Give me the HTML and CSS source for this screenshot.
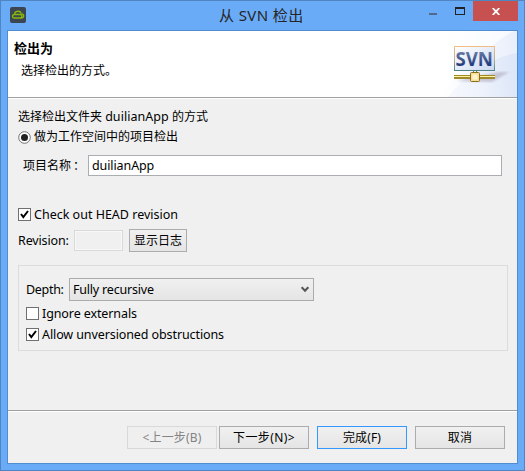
FILE: index.html
```html
<!DOCTYPE html>
<html lang="zh-CN">
<head>
<meta charset="utf-8">
<title>从 SVN 检出</title>
<link rel="stylesheet" href="styles.css">
</head>
<body>
<div class="window">
  <div class="titlebar">
    <svg class="app-icon" width="16" height="16" viewBox="0 0 16 16">
      <rect width="16" height="16" rx="2" fill="#3b4652"/>
      <path d="M4.5 7.5C4.5 3.5 10.5 3.2 11 6.5M4.5 7.5H10.5M4.5 7.5C1.7 7.8 2 11 4.5 11H11.5C14.5 11 14.3 6.7 11.5 7M10 7.5C12.5 7.8 12.5 10.5 10 11" fill="none" stroke="#86b50b" stroke-width="1.4"/>
    </svg>
    <div class="title">从 SVN 检出</div>
    <div class="controls">
      <span class="minimize"></span>
      <span class="maximize"></span>
      <span class="close"><svg width="8" height="7" viewBox="0 0 8 7"><path d="M.7 0L7.3 7M7.3 0L.7 7" stroke="#fff" stroke-width="1.8"/></svg></span>
    </div>
  </div>
  <div class="client">
    <header class="banner">
      <div class="banner-text">
        <div class="heading">检出为</div>
        <div class="description">选择检出的方式。</div>
      </div>
      <svg class="banner-art" width="75" height="66" viewBox="0 0 75 66">
        <defs>
          <linearGradient id="sweep" x1="0" y1="0.5" x2="1" y2="0.4"><stop offset="0" stop-color="#f6f8fe"/><stop offset=".5" stop-color="#ecf1fb"/><stop offset="1" stop-color="#dce6f8"/></linearGradient>
          <linearGradient id="low" x1="0" y1="0" x2="1" y2="0"><stop offset="0" stop-color="#fff"/><stop offset="1" stop-color="#e9effb"/></linearGradient>
          <linearGradient id="frame" x1="0" y1="0" x2="0" y2="1"><stop offset="0" stop-color="#efbd83"/><stop offset=".55" stop-color="#b6ae93"/><stop offset="1" stop-color="#4f8383"/></linearGradient>
          <linearGradient id="screen" x1="0" y1="0" x2="1" y2="1"><stop offset="0" stop-color="#fff"/><stop offset="1" stop-color="#cbd9f3"/></linearGradient>
          <linearGradient id="ink" x1="0" y1="0" x2="0" y2="1"><stop offset="0.2" stop-color="#7080a8"/><stop offset=".8" stop-color="#1d3577"/></linearGradient>
          <filter id="soft"><feGaussianBlur stdDeviation="1.3"/></filter>
        </defs>
        <rect width="75" height="66" fill="url(#low)"/>
        <path d="M6 66C25 42 47 27 75 22V66Z" fill="url(#sweep)"/>
        <path d="M0 0H72C55 8 45 22 24 36L0 60Z" fill="#fff" opacity=".65"/>
        <path d="M14 50L56 41H67L50 51Z" fill="#b8b4c7" opacity=".7" filter="url(#soft)"/>
        <rect x="12.5" y="15.5" width="40" height="24" fill="url(#screen)" stroke="url(#frame)"/>
        <text class="svn" x="13.5" y="35" textLength="37.5" lengthAdjust="spacingAndGlyphs" fill="url(#ink)">SVN</text>
        <path d="M31.5 40V42M34.5 40V42" stroke="#658071"/>
        <rect x="12" y="44" width="41" height="4" fill="#a08b28"/>
        <path d="M12 45.5H53" stroke="#fff3a0"/>
        <rect x="28.5" y="41.5" width="9" height="9" rx="1" fill="#f6df95" stroke="#88701e"/>
        <rect x="30.5" y="43.5" width="5" height="5" fill="#fff2cf"/>
      </svg>
    </header>
    <main class="content">
      <div class="prompt"><span>选择检出文件夹 </span><span class="latin prompt-name">duilianApp</span><span> 的方式</span></div>
      <div class="radio-row">
        <svg width="13" height="13" viewBox="0 0 13 13"><circle cx="6.5" cy="6.5" r="5.8" fill="#fff" stroke="#707070"/><circle cx="6.5" cy="6.5" r="3.5" fill="#222"/></svg>
        <span>做为工作空间中的项目检出</span>
      </div>
      <div class="name-row"><span class="name-label">项目名称<span class="colon">：</span></span><div class="field latin">duilianApp</div></div>
      <div class="check-row head-row">
        <span class="box"><svg width="11" height="11" viewBox="0 0 11 11"><path d="M2 5L4.3 8L9 2" fill="none" stroke="#000" stroke-width="2"/></svg></span>
        <span class="latin">Check out HEAD revision</span>
      </div>
      <div class="revision-row">
        <span class="latin revision-label">Revision:</span><div class="revision-field"></div><div class="button log-button">显示日志</div>
      </div>
      <section class="group">
        <div class="depth-row"><span class="latin depth-label">Depth:</span>
          <div class="select"><span class="latin recursive">Fully recursive</span><svg width="8" height="7" viewBox="0 0 8 7"><path d="M.7 1.2L4 4.8L7.3 1.2" fill="none" stroke="#555" stroke-width="2"/></svg></div>
        </div>
        <div class="check-row ignore-row"><span class="box"></span><span class="latin ignore-label">Ignore externals</span></div>
        <div class="check-row allow-row"><span class="box"><svg width="11" height="11" viewBox="0 0 11 11"><path d="M2 5L4.3 8L9 2" fill="none" stroke="#000" stroke-width="2"/></svg></span><span class="latin allow-label">Allow unversioned obstructions</span></div>
      </section>
    </main>
    <footer class="footer">
      <div class="button nav disabled">&lt;上一步(B)</div>
      <div class="button nav next">下一步(N)&gt;</div>
      <div class="button nav finish">完成(F)</div>
      <div class="button nav">取消</div>
    </footer>
  </div>
</div>
</body>
</html>
```
FILE: styles.css
```css
* { box-sizing: border-box; }
body { margin: 0; color: #000; font: 12px/16px "Noto Sans", "Noto Sans CJK SC", sans-serif; overflow: hidden; }
svg { display: block; flex: none; }
.window { width: 525px; height: 471px; padding: 0 6px 6px; background: #6aabf7; border: 1px solid #4f86c1; }
.titlebar { height: 29px; display: flex; justify-content: space-between; align-items: flex-start; margin-right: -1px; }
.app-icon { margin: 6px 0 0 3px; }
.title { width: 90px; margin: 4px 0 0 193px; font-size: 15px; line-height: 20px; letter-spacing: .4px; white-space: nowrap; color: #252525; }
.controls { display: flex; margin-left: auto; }
.minimize { width: 8px; height: 2px; margin: 12px 18px 0 0; background: #50698c; }
.maximize { width: 10px; height: 8px; margin: 6px 8px 0 0; border: 1px solid #222; border-top-width: 2px; }
.close { width: 45px; height: 20px; margin-right: 1px; background: #c75050; display: flex; align-items: center; justify-content: center; }
.client { height: 434px; border: 1px solid #4f8cd0; background: #f0f0f0; }
.banner { height: 68px; display: flex; justify-content: space-between; background: linear-gradient(#fff 66px, #a0a0a0 66px, #a0a0a0 67px, #fff 67px); }
.banner-text { padding: 8px 0 0 6px; }
.heading { font-weight: 700; font-size: 13px; line-height: 18px; }
.description { margin: 5px 0 0 7px; line-height: 18px; }
.svn { font: 700 20px "Noto Sans", sans-serif; }
.content { height: 311px; padding: 10px 9px 0 10px; }
.prompt { height: 16px; white-space: pre; }
.latin { font-size: 12.5px; white-space: nowrap; }
.prompt-name { letter-spacing: .05px; }
.radio-row { height: 16px; margin-top: 4px; display: flex; align-items: center; gap: 3px; }
.name-row { display: flex; align-items: center; margin-top: 10px; padding-left: 5px; }
.name-label { width: 65px; }
.colon { padding-left: 2px; }
.field { width: 414px; height: 21px; border: 1px solid #abadb3; background: #fff; padding: 2px 3px 0; letter-spacing: -.1px; }
.check-row { display: flex; align-items: center; height: 16px; gap: 3px; }
.check-row .latin { padding-top: 2px; }
.box { width: 13px; height: 13px; border: 1px solid #707070; background: #fff; flex: none; }
.head-row { margin-top: 30px; }
.revision-row { margin-top: 7px; height: 23px; display: flex; align-items: center; }
.revision-label { width: 56px; letter-spacing: -.15px; }
.revision-field { width: 49px; height: 21px; border: 1px solid #d9d9d9; box-shadow: inset 0 0 0 1px #f8f8f8; margin-right: 6px; }
.button { height: 23px; border: 1px solid #acacac; background: linear-gradient(#f0f0f0, #e5e5e5); display: flex; align-items: center; justify-content: center; white-space: nowrap; }
.log-button { width: 58px; }
.group { width: 490px; height: 86px; margin-top: 13px; padding: 12px 7px; border: 1px solid #dcdcdc; }
.depth-row { display: flex; align-items: center; }
.depth-label { width: 43px; letter-spacing: -.3px; }
.recursive { letter-spacing: -.2px; }
.ignore-label, .allow-label { letter-spacing: -.1px; }
.select { width: 245px; height: 23px; border: 1px solid #acacac; background: linear-gradient(#f0f0f0, #e5e5e5); display: flex; align-items: center; justify-content: space-between; padding: 0 4px 0 3px; }
.ignore-row { margin-top: 4px; }
.allow-row { margin-top: 5px; }
.footer { height: 53px; border-top: 1px solid #a0a0a0; box-shadow: inset 0 1px #fff; padding: 15px 12px 0 0; display: flex; justify-content: flex-end; }
.nav { width: 90px; margin-left: 8px; letter-spacing: .15px; }
.next { margin-left: 2px; letter-spacing: .4px; }
.disabled { color: #838383; border-color: #d9d9d9; background: #efefef; }
.finish { border-color: #3399ff; }
```
